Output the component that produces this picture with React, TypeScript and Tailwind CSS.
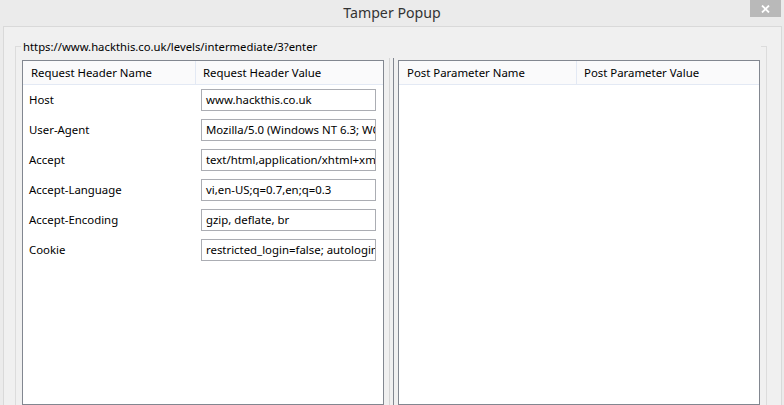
import React from 'react';

const HEADERS: [string, string][] = [
  ['Host', 'www.hackthis.co.uk'],
  ['User-Agent', 'Mozilla/5.0 (Windows NT 6.3; WOW64; rv:59.0) Gecko/20100101 Firefox/59.0'],
  ['Accept', 'text/html,application/xhtml+xml,application/xml;q=0.9,*/*;q=0.8'],
  ['Accept-Language', 'vi,en-US;q=0.7,en;q=0.3'],
  ['Accept-Encoding', 'gzip, deflate, br'],
  ['Cookie', 'restricted_login=false; autologin=1; PHPSESSID=abc'],
];

const font = { fontFamily: '"Noto Sans", "Open Sans", sans-serif' };

function HeaderRow({ left, right, leftW }: { left: string; right: string; leftW: string }) {
  return (
    <div className="flex h-[24px] border-b border-[#e3e9f4] bg-[#fafafb] text-[11.4px] text-black">
      <div className={`${leftW} flex items-center border-r border-[#e3e9f4] pl-[8px]`}>{left}</div>
      <div className="flex flex-1 items-center pl-[7px]">{right}</div>
    </div>
  );
}

export default function App() {
  return (
    <div className="flex h-[405px] w-[784px] flex-col overflow-hidden bg-[#ebebeb]" style={font}>
      {/* title bar */}
      <div className="relative flex h-[26px] shrink-0 items-center justify-center">
        <span className="text-[14.2px] leading-none text-[#333]">Tamper Popup</span>
        <div className="absolute right-[3px] top-0 flex h-[17px] w-[31px] items-center justify-center bg-[#b9b9b9] text-white">
          <svg width="9" height="8" viewBox="0 0 9 8" fill="none" stroke="currentColor" strokeWidth="1.8">
            <path d="M1 0.5 L8 7.5 M8 0.5 L1 7.5" />
          </svg>
        </div>
      </div>

      {/* window body */}
      <div className="ml-[3px] flex w-[779px] flex-1 flex-col border-l border-r border-t border-[#d9d9d9] bg-[#f0f0f0] pl-[11px] pt-[19px]">
        <div className="flex w-[752px] flex-1 flex-col border-l border-r border-t border-[#dcdcdc]">
          <div className="-mt-[9px] ml-[5px] mr-[5px] h-[17px] bg-[#f0f0f0] pl-[2px] text-[11.3px] leading-[17px] text-black">
            https://www.hackthis.co.uk/levels/intermediate/3?enter
          </div>

          <div className="mt-[5px] flex flex-1 px-[6px]">
            {/* request headers */}
            <div className="flex w-[362px] flex-col border border-[#828790] bg-white">
              <HeaderRow left="Request Header Name" right="Request Header Value" leftW="w-[173px]" />
              <div className="flex flex-col gap-[8px] pt-[4px]">
                {HEADERS.map(([name, value]) => (
                  <div key={name} className="flex h-[22px] items-center text-[11.4px] text-black">
                    <div className="w-[178px] pl-[6px]">{name}</div>
                    <div className="flex h-[22px] w-[175px] items-center overflow-hidden whitespace-nowrap border border-[#abadb3] bg-white pl-[4px]">
                      {value}
                    </div>
                  </div>
                ))}
              </div>
            </div>

            {/* splitter */}
            <div className="-mt-[2px] flex w-[14px] shrink-0">
              <div className="ml-[5px] w-px bg-[#d5d5d5]" />
              <div className="ml-[3px] w-px bg-[#828790]" />
            </div>

            {/* post parameters */}
            <div className="flex w-[362px] flex-col border border-[#828790] bg-white">
              <HeaderRow left="Post Parameter Name" right="Post Parameter Value" leftW="w-[178px]" />
            </div>
          </div>
        </div>
      </div>
    </div>
  );
}
